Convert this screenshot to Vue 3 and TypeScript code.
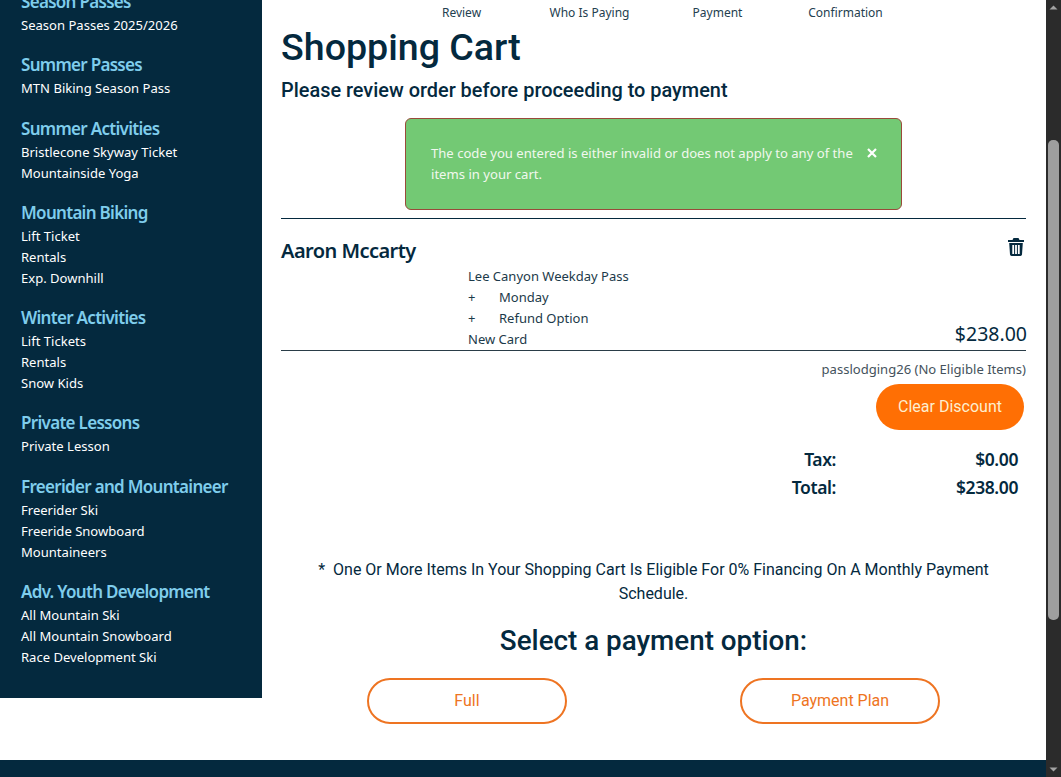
<script setup lang="ts">
interface NavGroup {
  title: string;
  links: string[];
}

const groups: NavGroup[] = [
  { title: "Season Passes", links: ["Season Passes 2025/2026"] },
  { title: "Summer Passes", links: ["MTN Biking Season Pass"] },
  { title: "Summer Activities", links: ["Bristlecone Skyway Ticket", "Mountainside Yoga"] },
  { title: "Mountain Biking", links: ["Lift Ticket", "Rentals", "Exp. Downhill"] },
  { title: "Winter Activities", links: ["Lift Tickets", "Rentals", "Snow Kids"] },
  { title: "Private Lessons", links: ["Private Lesson"] },
  { title: "Freerider and Mountaineer", links: ["Freerider Ski", "Freeride Snowboard", "Mountaineers"] },
  { title: "Adv. Youth Development", links: ["All Mountain Ski", "All Mountain Snowboard", "Race Development Ski"] },
];

const steps = ["Review", "Who Is Paying", "Payment", "Confirmation"];
</script>

<template>
  <div class="window">
    <div class="page">
      <div class="columns">
        <aside class="sidebar">
          <div class="sidebar-inner">
            <div v-for="g in groups" :key="g.title" class="group">
              <h3>{{ g.title }}</h3>
              <a v-for="l in g.links" :key="l" href="#">{{ l }}</a>
            </div>
          </div>
        </aside>

        <main class="content">
          <nav class="steps">
            <span v-for="s in steps" :key="s">{{ s }}</span>
          </nav>
          <h1>Shopping Cart</h1>
          <h2>Please review order before proceeding to payment</h2>

          <div class="alert">
            <p>The code you entered is either invalid or does not apply to any of the items in your cart.</p>
            <svg class="close" viewBox="0 0 12 12" width="12" height="12">
              <path d="M2 2l8 8M10 2l-8 8" stroke="#fff" stroke-width="2.2" fill="none" />
            </svg>
          </div>

          <section class="cart-item">
            <div class="item-head">
              <span class="name">Aaron Mccarty</span>
              <svg class="trash" viewBox="0 0 16 18" width="16" height="18">
                <path fill="#04293e" d="M5.500 0h5l1 2H16v2H0V2h4.500zM1.200 5h13.600l-.8 11.500a1.600 1.600 0 0 1-1.600 1.500H3.600A1.600 1.600 0 0 1 2 16.500zM4.300 7v9h1.800V7zm2.800 0v9h1.800V7zm2.800 0v9h1.800V7z" fill-rule="evenodd" />
              </svg>
            </div>
            <div class="item-body">
              <div class="item-lines">
                <div>Lee Canyon Weekday Pass</div>
                <div class="addon"><i>+</i>Monday</div>
                <div class="addon"><i>+</i>Refund Option</div>
                <div>New Card</div>
              </div>
              <div class="price">$238.00</div>
            </div>
          </section>

          <div class="discount">passlodging26 (No Eligible Items)</div>
          <div class="discount-action">
            <button class="btn-solid">Clear Discount</button>
          </div>

          <div class="totals">
            <span class="label">Tax:</span><span class="value">$0.00</span>
            <span class="label">Total:</span><span class="value">$238.00</span>
          </div>

          <p class="financing">* &nbsp;One Or More Items In Your Shopping Cart Is Eligible For 0% Financing On A Monthly Payment Schedule.</p>
          <h2 class="select">Select a payment option:</h2>
          <div class="options">
            <button class="btn-outline">Full</button>
            <button class="btn-outline">Payment Plan</button>
          </div>
        </main>
      </div>
      <footer class="footer"></footer>
    </div>

    <div class="scrollbar">
      <svg viewBox="0 0 15 15" width="15" height="15"><path d="M3.500 9.500L7.500 5.500l4 4z" fill="#a3a3a3" /></svg>
      <div class="track"><div class="thumb"></div></div>
      <svg viewBox="0 0 15 15" width="15" height="15"><path d="M3.500 5.500L7.500 9.500l4-4z" fill="#a3a3a3" /></svg>
    </div>
  </div>
</template>

<style>
html,
body {
  margin: 0;
  overflow: hidden;
}
</style>

<style scoped>
.window {
  display: flex;
  width: 1061px;
  height: 777px;
  overflow: hidden;
  background: #fff;
  font-family: "Noto Sans", sans-serif;
  color: #04293e;
}

.page {
  flex: 1;
  min-width: 0;
  display: flex;
  flex-direction: column;
}

.columns {
  flex: 1;
  min-height: 0;
  display: flex;
  align-items: flex-start;
}

.sidebar {
  width: 262px;
  height: 698px;
  flex: none;
  overflow: hidden;
  background: #04293e;
}

.sidebar-inner {
  margin-top: -10px;
  padding-left: 21px;
}

.group {
  margin-bottom: 17.300px;
}

.group h3 {
  margin: 0 0 1px;
  font-size: 17px;
  line-height: 24px;
  font-weight: 600;
  letter-spacing: -0.7px;
  color: #7fcdec;
}

.group a {
  display: block;
  font-size: 13.050px;
  line-height: 21px;
  color: #fff;
  text-decoration: none;
}

.content {
  flex: 1;
  min-width: 0;
  padding: 0 20px 0 19px;
}

.steps {
  display: grid;
  grid-template-columns: repeat(4, 128px);
  justify-content: center;
  height: 26px;
  font-size: 12px;
  line-height: 26px;
  text-align: center;
  color: #24404f;
}

h1 {
  margin: 0;
  font-family: Roboto, sans-serif;
  font-size: 37.600px;
  line-height: 42px;
  font-weight: 500;
}

.content > h2 {
  margin: 11px 0 0;
  font-family: Roboto, sans-serif;
  font-size: 19.900px;
  line-height: 24px;
  font-weight: 500;
}

.alert {
  display: flex;
  align-items: flex-start;
  box-sizing: border-box;
  width: 497px;
  height: 92px;
  margin: 15px auto 0;
  padding: 24px 23px 0 25px;
  background: #73c974;
  border: 1px solid #9a4a3a;
  border-radius: 6px;
  color: #f1f8ee;
}

.alert p {
  margin: 0;
  font-size: 13.100px;
  line-height: 21px;
}

.close {
  flex: none;
  margin: 4px 0 0 9px;
}

.cart-item {
  margin-top: 8px;
  border-top: 1px solid #04293e;
  border-bottom: 1px solid #2a3d48;
}

.item-head {
  display: flex;
  justify-content: space-between;
  padding-top: 18px;
  height: 27px;
}

.name {
  font-size: 20px;
  line-height: 27px;
  font-weight: 600;
  letter-spacing: -0.55px;
}

.trash {
  margin: 1px 2px 0 0;
}

.item-body {
  display: flex;
  justify-content: space-between;
  align-items: flex-end;
  padding: 0 0 0 187px;
  margin-top: 2px;
}

.item-lines {
  font-size: 13px;
  line-height: 21px;
  color: #1c3a4a;
}

.addon i {
  display: inline-block;
  width: 31px;
  font-style: normal;
}

.price {
  margin-right: -1px;
  font-size: 19.500px;
  line-height: 30px;
  padding-bottom: 1px;
}

.discount {
  margin-top: 8px;
  text-align: right;
  font-size: 13.050px;
  line-height: 21px;
  color: #44525c;
}

.discount-action {
  display: flex;
  justify-content: flex-end;
  margin-top: 4px;
  padding-right: 2px;
}

button {
  padding: 0 0 2px;
  font-family: Roboto, sans-serif;
  font-size: 16px;
  cursor: pointer;
}

.btn-solid {
  width: 148px;
  height: 46px;
  border: 0;
  border-radius: 23px;
  background: #ff6f04;
  color: #fdeecf;
}

.totals {
  display: grid;
  grid-template-columns: 56px 1fr;
  width: 238px;
  margin: 15px 8px 0 auto;
  font-size: 17.500px;
  line-height: 28px;
  font-weight: 600;
  letter-spacing: -0.4px;
}

.label {
  text-align: right;
}

.value {
  text-align: right;
}

.financing {
  margin: 57px 0 0;
  padding: 0 30px;
  text-align: center;
  font-family: Roboto, sans-serif;
  font-size: 16px;
  line-height: 24px;
}

.content > .select {
  margin: 19px 0 0;
  text-align: center;
  font-size: 27.800px;
  line-height: 32px;
}

.options {
  display: flex;
  justify-content: center;
  gap: 173px;
  margin-top: 21px;
}

.btn-outline {
  width: 200px;
  height: 46px;
  border: 2px solid #ee7422;
  border-radius: 23px;
  background: #fff;
  color: #ee7422;
}

.footer {
  height: 17px;
  flex: none;
  background: #04293e;
}

.scrollbar {
  width: 15px;
  flex: none;
  display: flex;
  flex-direction: column;
  background: #2b2b2b;
}

.scrollbar svg {
  flex: none;
}

.track {
  flex: 1;
  padding-top: 125px;
}

.thumb {
  height: 480px;
  margin: 0 2px;
  border-radius: 5px;
  background: #9e9e9e;
}
</style>
